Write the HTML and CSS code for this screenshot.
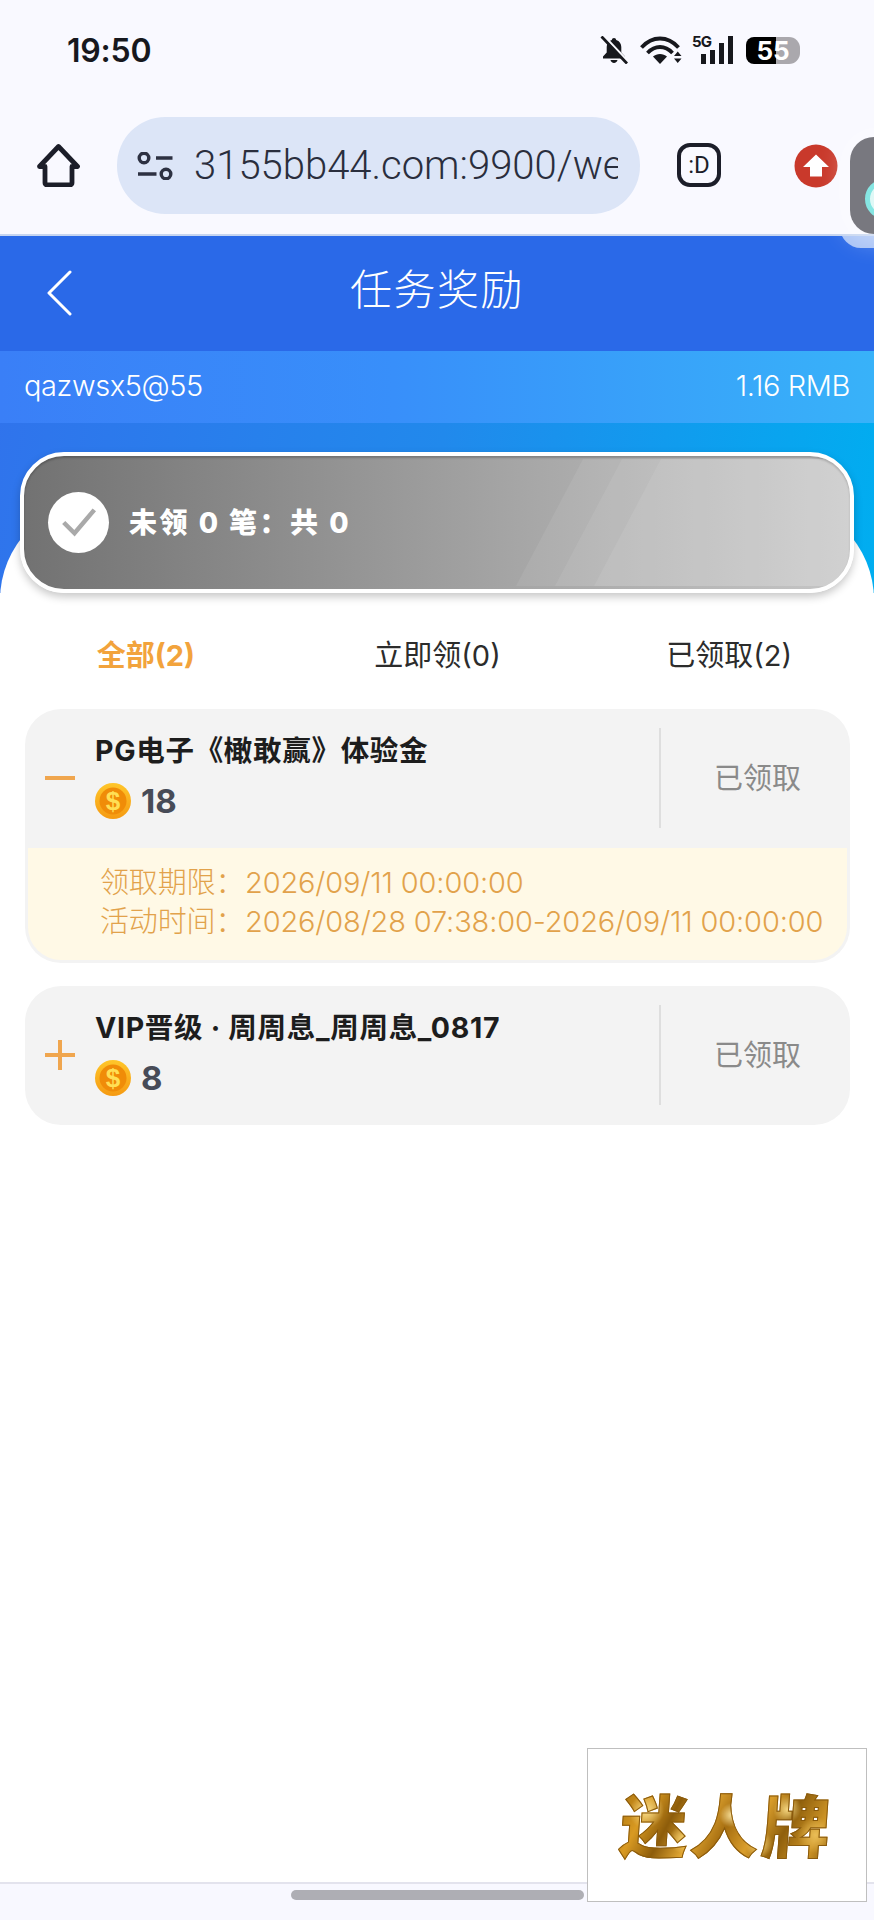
FILE: index.html
```html
<!DOCTYPE html>
<html lang="zh">
<head>
<meta charset="utf-8">
<title>任务奖励</title>
<link rel="stylesheet" href="styles.css">
</head>
<body>
<div class="page">
  <header class="chrome">
    <div class="status">
      <span class="time">19:50</span>
      <div class="status-icons">
        <svg class="i-bell" viewBox="0 0 28 28"><path d="M14 2c-1.300 0-2 .8-2.200 1.900C8.400 4.900 6.700 7.700 6.700 11v5.500L3 20.500v2h22v-2l-3.700-4V11c0-3.300-1.700-6.100-5.100-7.100C16 2.800 15.300 2 14 2zM10.500 24c.3 1.600 1.800 3 3.500 3s3.200-1.400 3.500-3z" fill="#17181d"/><path d="M3.500 -.5 28 25.500" stroke="#fafaff" stroke-width="2.500"/><path d="M1.500 0.500 27 27.500" stroke="#17181d" stroke-width="2.800"/></svg>
        <svg class="i-wifi" viewBox="0 0 42 28"><g fill="none" stroke="#17181d" stroke-width="3.800"><path d="M1.500 11.500C6.500 6 12.500 2.500 20 2.500s13.500 3.500 18.500 9"/><path d="M7.500 17C11 13.300 15 11 20 11s9 2.300 12.500 6"/></g><path d="M13 20.500c2-1.800 4.300-2.600 7-2.600s5 .8 7 2.600l-7 7.500z" fill="#17181d"/><path d="M34 20h7.500l-3.750-4.500zM34 22.500h7.500l-3.750 4.500z" fill="#17181d"/></svg>
        <div class="signal">
          <span class="five-g">5G</span>
          <i class="bar b1"></i><i class="bar b2"></i><i class="bar b3"></i><i class="bar b4"></i>
        </div>
        <div class="battery"><span class="battery-num">55</span></div>
      </div>
    </div>
    <div class="toolbar">
      <svg class="i-home" viewBox="0 0 44 44"><path d="M2.500 23.500 21.500 3.500l19 20h-5.500v16.500a2 2 0 0 1-2 2H10a2 2 0 0 1-2-2V23.500z" fill="none" stroke="#1c1e29" stroke-width="4.800" stroke-linejoin="round"/></svg>
      <div class="url">
        <svg class="i-tune" viewBox="0 0 36 28"><g fill="none" stroke="#2d3142" stroke-width="3.400"><circle cx="7" cy="6" r="4.800"/><circle cx="29" cy="22" r="4.800"/><path d="M19 6h16.500M1 22h18.500"/></g></svg>
        <span class="url-text">3155bb44.com:9900/we</span>
      </div>
      <div class="i-face">:D</div>
      <svg class="i-up" viewBox="0 0 44 44"><circle cx="22" cy="22" r="21.500" fill="#c9392b"/><path d="M22 10.500 35 23h-7v9.500H16V23H9z" fill="#fff"/></svg>
    </div>
  </header>

  <div class="float-ball"><span class="float-dot"></span></div>

  <nav class="nav">
    <svg class="i-back" viewBox="0 0 26 46"><path d="M24 2 3 23l21 21" fill="none" stroke="#fff" stroke-width="3" stroke-linecap="round" stroke-linejoin="round"/></svg>
    <h1 class="nav-title">任务奖励</h1>
  </nav>

  <section class="hero">
    <div class="user-bar">
      <span>qazwsx5@55</span>
      <span>1.16 RMB</span>
    </div>
    <div class="banner">
      <i class="stripe s1"></i><i class="stripe s2"></i><i class="stripe s3"></i>
      <span class="check">
        <svg viewBox="0 0 40 34"><path d="M3 17 15 29 37 3" fill="none" stroke="#a9a9a9" stroke-width="5"/></svg>
      </span>
      <span class="banner-text">未领 0 笔：共 0</span>
    </div>
  </section>

  <main class="sheet">
    <div class="tabs">
      <span class="tab active">全部(2)</span>
      <span class="tab">立即领(0)</span>
      <span class="tab">已领取(2)</span>
    </div>

    <div class="cards">
      <article class="card">
        <div class="card-head">
          <div class="toggle"><span class="minus"></span></div>
          <div class="info">
            <div class="title">PG电子《橄敢赢》体验金</div>
            <div class="amount">
              <svg class="coin" viewBox="0 0 36 36"><defs><linearGradient id="c1" x1="0" y1="0" x2="0" y2="1"><stop offset="0" stop-color="#ffc62a"/><stop offset="1" stop-color="#f59a12"/></linearGradient></defs><circle cx="18" cy="18" r="18" fill="url(#c1)"/><circle cx="18" cy="18" r="13.500" fill="#f08c08"/><text x="18" y="27" class="coin-glyph">$</text></svg>
              <span>18</span>
            </div>
          </div>
          <div class="state"><span>已领取</span></div>
        </div>
        <div class="detail">
          <div class="detail-row"><span class="detail-label">领取期限：</span><span>2026/09/11 00:00:00</span></div>
          <div class="detail-row"><span class="detail-label">活动时间：</span><span>2026/08/28 07:38:00-2026/09/11 00:00:00</span></div>
        </div>
      </article>

      <article class="card">
        <div class="card-head">
          <div class="toggle"><span class="plus"></span></div>
          <div class="info">
            <div class="title">VIP晋级 · 周周息_周周息_0817</div>
            <div class="amount">
              <svg class="coin" viewBox="0 0 36 36"><defs><linearGradient id="c2" x1="0" y1="0" x2="0" y2="1"><stop offset="0" stop-color="#ffc62a"/><stop offset="1" stop-color="#f59a12"/></linearGradient></defs><circle cx="18" cy="18" r="18" fill="url(#c2)"/><circle cx="18" cy="18" r="13.500" fill="#f08c08"/><text x="18" y="27" class="coin-glyph">$</text></svg>
              <span>8</span>
            </div>
          </div>
          <div class="state"><span>已领取</span></div>
        </div>
      </article>
    </div>
  </main>

  <footer class="footer"><span class="handle"></span></footer>
  <div class="logo-box"><span class="logo-text">迷人牌</span></div>
</div>
</body>
</html>
```
FILE: styles.css
```css
* { box-sizing: border-box; }
html, body { margin: 0; padding: 0; }
body {
  font-family: Inter, "Noto Sans CJK SC", sans-serif;
  background: #fff;
  color: #1e1e1e;
}
.page {
  position: relative;
  width: 874px;
  height: 1920px;
  overflow: hidden;
  display: flex;
  flex-direction: column;
}

/* browser chrome */
.chrome {
  height: 236px;
  background: #f9f9ff;
  border-bottom: 2px solid #c6d5f0;
  flex: none;
}
.status {
  height: 100px;
  padding: 0 74px 0 67px;
  display: flex;
  align-items: center;
  justify-content: space-between;
}
.time { font-size: 32px; font-weight: 600; letter-spacing: -0.2px; color: #17181d; }
.status-icons { display: flex; align-items: flex-start; }
.i-bell { width: 28px; height: 28px; display: block; }
.i-wifi { width: 42px; height: 28px; display: block; margin-left: 12px; }
.signal { position: relative; width: 42px; height: 28px; margin-left: 9px; display: flex; align-items: flex-end; justify-content: flex-end; gap: 4px; }
.five-g { position: absolute; left: 1px; top: -2px; font-size: 15px; line-height: 16px; font-weight: 700; letter-spacing: -0.8px; color: #17181d; }
.bar { width: 5px; background: #17181d; display: block; }
.b1 { height: 10px; }
.b2 { height: 14px; }
.b3 { height: 21px; }
.b4 { height: 28px; }
.battery {
  width: 54px;
  height: 27px;
  margin-left: 13px;
  margin-top: 1px;
  border-radius: 8px 11px 11px 8px;
  background: linear-gradient(90deg, #000 30px, #aaa8ad 30px);
  display: flex;
  align-items: center;
  justify-content: center;
}
.battery-num { color: #fff; font-size: 26px; font-weight: 700; line-height: 27px; }
.toolbar {
  position: relative;
  height: 134px;
  display: flex;
  align-items: flex-start;
  padding: 17px 0 0 37px;
}
.i-home { width: 44px; height: 44px; margin-top: 26px; flex: none; }
.url {
  width: 523px;
  height: 97px;
  margin-left: 36px;
  flex: none;
  border-radius: 48px;
  background: #dce5f7;
  display: flex;
  align-items: center;
  padding-left: 20px;
}
.i-tune { width: 36px; height: 28px; flex: none; }
.url-text {
  margin-left: 21px;
  width: 424px;
  flex: none;
  overflow: hidden;
  white-space: nowrap;
  font-family: Roboto, sans-serif;
  font-size: 40px;
  line-height: 50px;
  font-weight: 300;
  letter-spacing: 0;
  color: #2a2e3d;
}
.i-face {
  width: 44px;
  height: 44px;
  margin: 26px 0 0 37px;
  flex: none;
  border: 4.500px solid #1c1e29;
  border-radius: 13px;
  display: flex;
  align-items: center;
  justify-content: center;
  font-family: Roboto, sans-serif;
  font-size: 24px;
  color: #1c1e29;
}
.i-up { width: 44px; height: 44px; margin: 27px 0 0 73px; flex: none; }

/* floating assistive ball */
.float-ball {
  position: absolute;
  left: 850px;
  top: 137px;
  width: 60px;
  height: 97px;
  border-radius: 24px 0 0 24px;
  background: #78787f;
  box-shadow: 0 0 24px 8px rgba(255,255,255,.35);
  overflow: hidden;
  z-index: 3;
}
.float-dot {
  position: absolute;
  left: 15px;
  top: 42px;
  width: 40px;
  height: 40px;
  border-radius: 50%;
  background: #dff8f6;
  border: 5px solid #86e6e3;
}

/* nav */
.nav {
  position: relative;
  height: 115px;
  flex: none;
  background: #2a69e8;
  overflow: hidden;
  display: flex;
  align-items: flex-start;
  justify-content: center;
  padding-top: 26px;
}
.nav::after {
  content: "";
  position: absolute;
  left: 840px;
  top: -30px;
  width: 60px;
  height: 42px;
  border-radius: 24px;
  background: #a9c3f6;
}
.i-back { position: absolute; left: 46px; top: 34px; width: 26px; height: 46px; }
.nav-title {
  margin: 0;
  font-size: 42px;
  line-height: 56px;
  font-weight: 300;
  color: #fff;
  letter-spacing: 1.500px;
}

/* hero */
.hero {
  flex: none;
  height: 242px;
  background: linear-gradient(100deg, #3073ec 0%, #2189ec 50%, #00aef0 100%);
}
.user-bar {
  height: 72px;
  display: flex;
  align-items: center;
  justify-content: space-between;
  padding: 0 24px 3px;
  font-size: 29px;
  font-weight: 300;
  letter-spacing: -0.4px;
  color: #fff;
  background: linear-gradient(90deg, #3a7ff7 0%, #388ffa 45%, #38b2f9 100%);
}
.banner {
  position: relative;
  z-index: 1;
  height: 141px;
  margin: 29px 20px 0 20px;
  border: 4px solid #fff;
  border-radius: 44px;
  box-shadow: 0 4px 8px rgba(0,0,0,.22), inset 0 2px 2px rgba(0,0,0,.22);
  background: linear-gradient(90deg, #727272 0%, #a6a6a6 60%, #c6c6c6 100%);
  display: flex;
  align-items: center;
  padding-left: 24px;
  overflow: hidden;
}
.stripe {
  position: absolute;
  top: 3px;
  bottom: 3px;
  right: 0;
  background: rgba(255,255,255,.075);
  clip-path: polygon(67px 0, 100% 0, 100% 100%, 0 100%);
}
.s1 { left: 492px; }
.s2 { left: 531px; }
.s3 { left: 570px; }
.check {
  position: relative;
  z-index: 1;
  width: 61px;
  height: 61px;
  border-radius: 50%;
  background: #fff;
  display: flex;
  align-items: center;
  justify-content: center;
  flex: none;
}
.check svg { width: 36px; height: 31px; }
.banner-text {
  position: relative;
  z-index: 1;
  margin-left: 20px;
  padding-bottom: 4px;
  font-size: 28px;
  font-weight: 800;
  letter-spacing: 2.500px;
  color: #fff;
}

/* sheet */
.sheet {
  flex: 1;
  margin-top: -93px;
  padding: 125px 24px 0 25px;
  background: #fff;
  border-radius: 100px 100px 0 0;
}
.tabs {
  height: 56px;
  margin: 0 -25px;
  display: grid;
  grid-template-columns: repeat(3, 1fr);
  align-items: center;
  text-align: center;
  font-size: 29px;
  color: #2c2c2c;
  font-weight: 400;
}
.tab.active { color: #f2a33c; font-weight: 700; }
.cards { margin-top: 28px; display: flex; flex-direction: column; gap: 23px; }
.card {
  background: #f3f3f3;
  border-radius: 36px;
  padding: 0 3px 3px;
  overflow: hidden;
}
.card-head {
  display: flex;
  height: 136px;
  padding-top: 19px;
  margin: 0 -3px;
}
.toggle {
  width: 70px;
  height: 100px;
  display: flex;
  align-items: center;
  padding-left: 20px;
  flex: none;
}
.minus { display: block; width: 30px; height: 4px; background: #f0a64e; }
.plus { position: relative; display: block; width: 30px; height: 30px; }
.plus::before, .plus::after { content: ""; position: absolute; background: #f0a64e; }
.plus::before { left: 0; right: 0; top: 13px; height: 4px; }
.plus::after { top: 0; bottom: 0; left: 13px; width: 4px; }
.info { flex: 1; margin-top: 5px; }
.title { font-size: 28.500px; line-height: 36px; font-weight: 700; color: #1d1d1d; letter-spacing: 0.700px; white-space: nowrap; }
.amount {
  display: flex;
  align-items: center;
  gap: 10px;
  margin-top: 14px;
  font-size: 33px;
  line-height: 36px;
  font-weight: 700;
  color: #474b57;
}
.coin { width: 36px; height: 36px; flex: none; }
.coin-glyph { font-family: "Liberation Sans", sans-serif; font-size: 26px; font-weight: 700; fill: #ffdf55; text-anchor: middle; }
.state {
  width: 191px;
  height: 100px;
  flex: none;
  border-left: 2px solid #dedede;
  display: flex;
  align-items: center;
  padding: 0 0 4px 53px;
  font-size: 29px;
  color: #8a8a8a;
}
.detail {
  height: 112px;
  margin-top: 3px;
  border-radius: 0 0 33px 33px;
  background: #fff9e6;
  padding: 15px 0 0 72px;
  font-size: 29px;
  line-height: 39px;
  font-weight: 300;
  color: #e2a24b;
  letter-spacing: -0.150px;
}
.detail-row { display: flex; white-space: nowrap; }
.detail-label { width: 145px; flex: none; }

/* footer */
.footer {
  flex: none;
  height: 38px;
  background: #f8f8ff;
  border-top: 2px solid #e3e3ed;
  display: flex;
  justify-content: center;
  padding-top: 6px;
}
.handle { width: 293px; height: 10px; border-radius: 5px; background: #aeaeb4; }
.logo-box {
  position: absolute;
  left: 587px;
  top: 1748px;
  width: 280px;
  height: 154px;
  background: #fff;
  border: 1px solid #bfbfbf;
  display: flex;
  align-items: center;
  justify-content: center;
}
.logo-text {
  font-size: 68px;
  line-height: 80px;
  font-weight: 900;
  transform: skewX(-4deg);
  letter-spacing: 3px;
  background:
    radial-gradient(circle at 12% 30%, #f7dc8a 0, rgba(247,220,138,0) 9%),
    radial-gradient(circle at 30% 65%, #f4cf6e 0, rgba(244,207,110,0) 9%),
    radial-gradient(circle at 52% 35%, #f8e09a 0, rgba(248,224,154,0) 10%),
    radial-gradient(circle at 66% 72%, #f3cf73 0, rgba(243,207,115,0) 9%),
    radial-gradient(circle at 78% 28%, #f5d680 0, rgba(245,214,128,0) 8%),
    radial-gradient(circle at 92% 60%, #e9bd57 0, rgba(233,189,87,0) 9%),
    linear-gradient(115deg, #a8720f 0%, #d99a22 14%, #8d5c0a 26%, #e2a733 38%, #a66e10 50%, #d99d2b 62%, #8f5f0c 74%, #cf9526 88%, #7d5208 100%);
  -webkit-background-clip: text;
  background-clip: text;
  color: transparent;
  -webkit-text-stroke: 1px #8a5a0c;
  margin-top: 4px;
}
```
